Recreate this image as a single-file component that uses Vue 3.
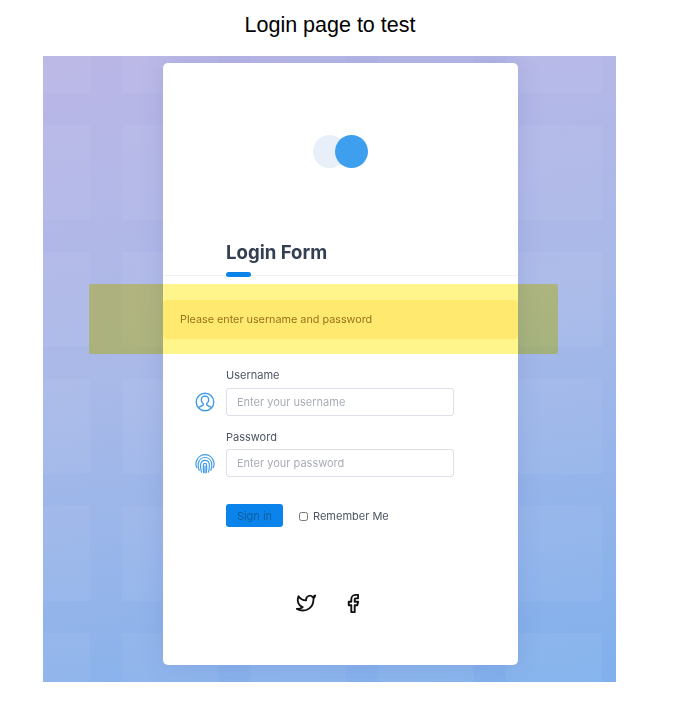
<script setup>
const tiles = Array.from({ length: 30 })
</script>

<template>
  <div class="page">
    <h1 class="title">Login page to test</h1>
    <div class="hero">
      <div class="tiles">
        <span v-for="(t, i) in tiles" :key="i" class="tile"></span>
      </div>
      <div class="card">
        <div class="logo">
          <span class="dot light"></span>
          <span class="dot blue"></span>
        </div>
        <h2 class="heading">Login Form</h2>
        <div class="rule"><span class="accent"></span></div>
        <div class="alert">Please enter username and password</div>

        <div class="field">
          <label class="label">Username</label>
          <div class="control">
            <svg class="field-icon" viewBox="0 0 24 24" fill="none" stroke="#3f9be8" stroke-width="1.5" stroke-linecap="round">
              <circle cx="12" cy="12" r="9.6" />
              <path d="M12 5.6c-2.5 0-4 1.9-4 4.2 0 2 1 3.3 2.1 4.2v1.2c-1.2.9-3.1 1.3-4.5 2.6" />
              <path d="M12 5.6c2.5 0 4 1.9 4 4.2 0 2-1 3.3-2.1 4.2v1.2c1.2.9 3.1 1.3 4.5 2.6" />
            </svg>
            <input class="input" type="text" placeholder="Enter your username" />
          </div>
        </div>
        <div class="field second">
          <label class="label">Password</label>
          <div class="control">
            <svg class="field-icon" viewBox="0 0 24 24" fill="none" stroke="#3f9be8" stroke-width="1.3" stroke-linecap="round">
              <path d="M3 17c-1-2-1.2-4-.7-6C3.500 6 7.500 2.800 12 2.800s8.500 3.200 9.700 8.200c.5 2 .3 4-.7 6" />
              <path d="M5.600 20c-1-2.500-1.400-5-.9-7.500C5.400 8.800 8.400 6 12 6s6.600 2.800 7.300 6.500c.5 2.500.1 5-.9 7.500" />
              <path d="M8.200 22c-.9-3-1.300-6-.9-8.700C7.800 10.800 9.700 9.200 12 9.200s4.200 1.600 4.700 4.100c.4 2.700 0 5.700-.9 8.700" />
              <path d="M10.600 22.500c-.4-3-.6-5.800-.4-8 .1-1.200.8-2 1.800-2s1.700.8 1.800 2c.2 2.200 0 5-.4 8" />
              <path d="M12 15.500v7" />
            </svg>
            <input class="input" type="password" placeholder="Enter your password" />
          </div>
        </div>

        <div class="actions">
          <button class="signin" type="button">Sign in</button>
          <label class="remember">
            <input class="check" type="checkbox" />
            <span>Remember Me</span>
          </label>
        </div>

        <div class="social">
          <svg class="twitter" viewBox="0 0 24 24" fill="none" stroke="#111" stroke-width="2.2" stroke-linejoin="round">
            <path d="M23 3a10.900 10.900 0 0 1-3 1.830 4.480 4.480 0 0 0-7.860 3v1A10.660 10.660 0 0 1 3 4s-4 9 5 13a11.640 11.640 0 0 1-7 2c9 5 20 0 20-11.500a4.500 4.500 0 0 0-.08-.83A7.720 7.720 0 0 0 23 3z" />
          </svg>
          <svg class="facebook" viewBox="5 1 14 22" fill="none" stroke="#111" stroke-width="2.2" stroke-linejoin="round">
            <path d="M18 2h-3a5 5 0 0 0-5 5v3H7v4h3v8h4v-8h3l1-4h-4V7a1 1 0 0 1 1-1h3z" />
          </svg>
        </div>
      </div>
      <div class="highlight"></div>
    </div>
  </div>
</template>

<style scoped>
.page {
  width: 660px;
  height: 704px;
  padding-top: 13px;
  box-sizing: border-box;
}

.title {
  margin: 0;
  height: 43px;
  font: 400 21.5px/24px "Liberation Sans", Arial, sans-serif;
  color: #000;
  text-align: center;
}

.hero {
  position: relative;
  margin-left: 43px;
  width: 573px;
  height: 626px;
  padding-top: 7px;
  box-sizing: border-box;
  overflow: hidden;
  background: linear-gradient(168deg, #bab6e6 0%, #a9b9e8 45%, #80b0ec 100%);
  filter: blur(0.4px);
}

.tiles {
  position: absolute;
  left: -49px;
  top: -58px;
  display: grid;
  grid-template-columns: repeat(5, 96px);
  grid-auto-rows: 95px;
  gap: 32px;
}

.tile {
  background: rgba(255, 255, 255, 0.05);
}

.card {
  position: relative;
  margin-left: 120px;
  width: 355px;
  height: 602px;
  border-radius: 5px;
  background: #fff;
  box-shadow: 0 0 24px rgba(70, 80, 170, 0.16);
  font-family: Inter, "Noto Sans", sans-serif;
}

.logo {
  display: flex;
  padding: 72px 0 0 150px;
  height: 33px;
}

.dot {
  width: 33px;
  height: 33px;
  border-radius: 50%;
}

.light {
  background: #e8eff8;
}

.blue {
  margin-left: -11px;
  background: #3f9fef;
}

.heading {
  margin: 72px 0 0 63px;
  font-size: 18.6px;
  line-height: 24px;
  font-weight: 700;
  color: #343f52;
}

.rule {
  margin-top: -1px;
  border-bottom: 1px solid #f0f0f3;
  height: 12px;
}

.accent {
  display: block;
  position: relative;
  top: 9px;
  margin-left: 63px;
  width: 25px;
  height: 5px;
  border-radius: 3px;
  background: #0a84ea;
}

.alert {
  margin-top: 24px;
  height: 39px;
  padding-left: 17px;
  border-radius: 4px;
  background: #fff3cd;
  color: #96772f;
  font-size: 10.8px;
  line-height: 39px;
}

.field {
  margin: 29px 0 0 63px;
}

.second {
  margin-top: 14px;
}

.label {
  display: block;
  height: 20px;
  font-size: 11px;
  line-height: 15px;
  color: #4c5563;
}

.second .label {
  height: 19px;
}

.control {
  position: relative;
}

.field-icon {
  position: absolute;
  left: -32px;
  top: 3px;
  width: 22px;
  height: 22px;
}

.input {
  display: block;
  width: 228px;
  height: 28px;
  padding: 0 10px;
  box-sizing: border-box;
  border: 1px solid #dcdfe8;
  border-radius: 3px;
  background: #fff;
  font: 400 11px Inter, "Noto Sans", sans-serif;
  outline: none;
}

.input::placeholder {
  color: #a9adb5;
}

.actions {
  display: flex;
  align-items: center;
  margin: 27px 0 0 63px;
}

.signin {
  width: 57px;
  height: 23px;
  padding: 0;
  border: 0;
  border-radius: 3px;
  background: #0a84ea;
  color: #0d5d9f;
  font: 400 11px Inter, "Noto Sans", sans-serif;
}

.remember {
  display: flex;
  align-items: center;
  margin-left: 16px;
  font-size: 11px;
  color: #4c5563;
}

.check {
  width: 9px;
  height: 9px;
  margin: 1px 5px 0 0;
}

.social {
  display: flex;
  align-items: center;
  margin: 66px 0 0 133px;
}

.twitter {
  width: 20px;
  height: 20px;
}

.facebook {
  width: 12px;
  height: 19px;
  margin-left: 31px;
}

.highlight {
  position: absolute;
  left: 46px;
  top: 228px;
  width: 469px;
  height: 70px;
  border-radius: 2px;
  background: #fff58a;
  mix-blend-mode: multiply;
}
</style>
